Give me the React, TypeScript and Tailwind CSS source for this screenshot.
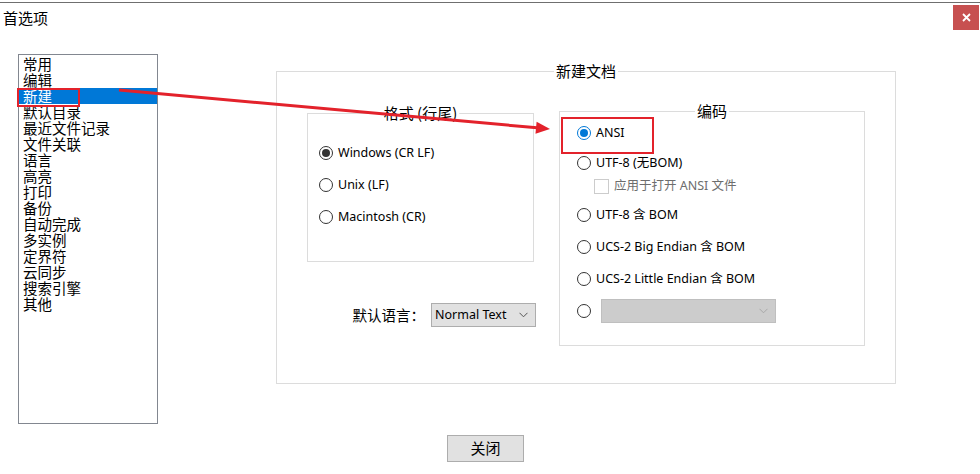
import React from 'react'

const listItems = [
  '常用', '编辑', '新建', '默认目录', '最近文件记录', '文件关联', '语言', '高亮',
  '打印', '备份', '自动完成', '多实例', '定界符', '云同步', '搜索引擎', '其他',
]

const cjk = '"Noto Sans CJK SC", sans-serif'
const ui = '"Noto Sans", "Noto Sans CJK SC", sans-serif'

function Radio({ checked, blue }: { checked?: boolean; blue?: boolean }) {
  const ring = blue && checked ? 'border-[#0078d7]' : 'border-[#333333]'
  return (
    <span className={`flex h-[14px] w-[14px] shrink-0 items-center justify-center rounded-full border bg-white ${ring}`}>
      {checked && <span className={`h-[8px] w-[8px] rounded-full ${blue ? 'bg-[#0078d7]' : 'bg-[#333333]'}`} />}
    </span>
  )
}

function Chevron({ color }: { color: string }) {
  return (
    <svg width="9" height="6" viewBox="0 0 9 6" fill="none">
      <polyline points="0.5,0.8 4.5,4.8 8.5,0.8" stroke={color} strokeWidth="1" />
    </svg>
  )
}

function Group({ title, className, children }: { title: string; className: string; children: React.ReactNode }) {
  return (
    <div className={`relative border border-[#dcdcdc] ${className}`}>
      <span
        className="absolute left-1/2 top-[-10px] -translate-x-1/2 whitespace-nowrap bg-white px-[2px] text-[15px] leading-[18px] text-black"
        style={{ fontFamily: cjk }}
      >
        {title}
      </span>
      {children}
    </div>
  )
}

function Row({ children, className = '' }: { children: React.ReactNode; className?: string }) {
  return <div className={`flex items-center ${className}`}>{children}</div>
}

export default function App() {
  return (
    <div className="relative h-[474px] w-[980px] overflow-hidden bg-white text-black" style={{ fontFamily: ui }}>
      <div className="h-[2px]" />
      <div className="h-px bg-[#6f6f6f]" />

      {/* title bar */}
      <div className="flex h-[30px] items-start justify-between">
        <span className="pl-[3px] pt-[6px] text-[15px] leading-[18px]" style={{ fontFamily: cjk }}>首选项</span>
        <span className="mr-px mt-[2px] flex h-[25px] w-[26px] items-center justify-center bg-[#c75050]">
          <svg width="9" height="9" viewBox="0 0 9 9">
            <path d="M1 1 L8 8 M8 1 L1 8" stroke="white" strokeWidth="1.8" />
          </svg>
        </span>
      </div>

      {/* body */}
      <div className="mt-[21px] flex items-start">
        <div className="ml-[18px] h-[370px] w-[140px] border border-[#828790] pt-[1px]" style={{ fontFamily: cjk }}>
          {listItems.map((it, i) => (
            <div
              key={it}
              className={`h-[16px] pl-[4px] text-[14.5px] leading-[16px] ${i === 2 ? 'bg-[#0078d7] text-white' : ''}`}
            >
              {it}
            </div>
          ))}
        </div>

        <Group title="新建文档" className="ml-[118px] mt-[17px] h-[313px] w-[620px]">
          <div className="flex items-start pl-[30px]">
            <div className="mt-[41px] w-[229px]">
              <Group title="格式 (行尾)" className="h-[149px] w-[227px]">
                <div className="flex flex-col pl-[11px] pt-[23px] text-[12.5px]">
                  <Row className="h-[32px] gap-[5px]"><Radio checked /><span>Windows (CR LF)</span></Row>
                  <Row className="h-[32px] gap-[5px]"><Radio /><span>Unix (LF)</span></Row>
                  <Row className="h-[32px] gap-[5px]"><Radio /><span>Macintosh (CR)</span></Row>
                </div>
              </Group>
              <div className="mt-[41px] flex h-[24px] items-center justify-end gap-[6px]">
                <span className="text-[14.5px]" style={{ fontFamily: cjk }}>默认语言：</span>
                <span className="flex h-[24px] w-[105px] items-center justify-between border border-[#adadad] bg-[#e1e1e1] pl-[3px] pr-[7px] text-[12.5px]">
                  Normal Text
                  <Chevron color="#555555" />
                </span>
              </div>
            </div>

            <Group title="编码" className="ml-[23px] mt-[39px] h-[235px] w-[306px]">
              <div className="flex flex-col pl-[17px] pt-[11px] text-[12.5px]">
                <Row className="h-[20px] gap-[5px]"><Radio checked blue /><span>ANSI</span></Row>
                <Row className="mt-[10px] h-[20px] gap-[5px]"><Radio /><span>UTF-8 (无BOM)</span></Row>
                <Row className="mt-[3px] h-[20px] gap-[5px] pl-[17px] text-[#6d6d6d]">
                  <span className="h-[15px] w-[15px] border border-[#cccccc] bg-white" />
                  <span>应用于打开 ANSI 文件</span>
                </Row>
                <Row className="mt-[9px] h-[20px] gap-[5px]"><Radio /><span>UTF-8 含 BOM</span></Row>
                <Row className="mt-[12px] h-[20px] gap-[5px]"><Radio /><span>UCS-2 Big Endian 含 BOM</span></Row>
                <Row className="mt-[12px] h-[20px] gap-[5px]"><Radio /><span>UCS-2 Little Endian 含 BOM</span></Row>
                <Row className="mt-[10px] h-[24px] gap-[10px]">
                  <Radio />
                  <span className="flex h-[24px] w-[175px] items-center justify-end border border-[#bfbfbf] bg-[#cccccc] pr-[7px]">
                    <Chevron color="#a8a8a8" />
                  </span>
                </Row>
              </div>
            </Group>
          </div>
        </Group>
      </div>

      <div className="mt-[11px] pl-[447px]">
        <button
          className="flex h-[27px] w-[77px] items-center justify-center border border-[#adadad] bg-[#e1e1e1] text-[15px]"
          style={{ fontFamily: cjk }}
        >
          关闭
        </button>
      </div>

      {/* annotations */}
      <div className="absolute left-[17px] top-[88px] h-[19px] w-[63px] border-2 border-[#e3222b]" />
      <div className="absolute left-[561px] top-[117px] h-[37px] w-[93px] border-2 border-[#e3222b]" />
      <svg className="pointer-events-none absolute left-0 top-0" width="980" height="474">
        <line x1="119" y1="90" x2="537" y2="127.8" stroke="#e3222b" strokeWidth="3" />
        <polygon points="550,129 536.6,121.8 535.5,133.7" fill="#e3222b" />
      </svg>
    </div>
  )
}
